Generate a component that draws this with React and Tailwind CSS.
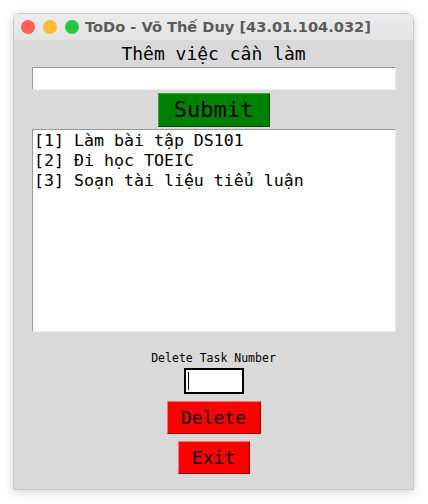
import React, { useState } from "react";

const mono = { fontFamily: '"DejaVu Sans Mono", "Liberation Mono", monospace' };

const App = () => {
  const [task, setTask] = useState("");
  const [num, setNum] = useState("");
  const [tasks, setTasks] = useState([
    "Làm bài tập DS101",
    "Đi học TOEIC",
    "Soạn tài liệu tiểu luận",
  ]);

  const addTask = () => {
    if (!task.trim()) return;
    setTasks([...tasks, task.trim()]);
    setTask("");
  };

  const deleteTask = () => {
    const i = parseInt(num, 10) - 1;
    if (isNaN(i) || i < 0 || i >= tasks.length) return;
    setTasks(tasks.filter((_, idx) => idx !== i));
    setNum("");
  };

  return (
    <div className="w-[428px] h-[504px] bg-white pt-[13px] pl-[13px]">
      <div className="w-[401px] h-[477px] flex flex-col rounded-t-[7px] border border-[#c9c9c9] shadow-[0_2px_10px_rgba(0,0,0,0.18)] overflow-hidden">
        {/* title bar */}
        <div className="h-[27px] shrink-0 flex items-center bg-gradient-to-b from-[#ececec] to-[#e3e3e3] border-b border-[#dadada] pl-[7px]">
          <span className="w-[14px] h-[14px] rounded-full bg-[#fe5f57]" />
          <span className="w-[14px] h-[14px] rounded-full bg-[#febc2e] ml-[8px]" />
          <span className="w-[14px] h-[14px] rounded-full bg-[#28c840] ml-[8px]" />
          <span
            className="ml-[6px] text-[14.6px] font-bold text-[#5b5b5b] leading-none"
            style={{ fontFamily: '"DejaVu Sans", "Liberation Sans", sans-serif' }}
          >
            ToDo - Võ Thế Duy [43.01.104.032]
          </span>
        </div>

        {/* body */}
        <div className="flex-1 bg-[#d9d9d9] flex flex-col items-center" style={mono}>
          <div className="h-[26px] text-[18px] leading-[26px] text-black">Thêm việc cần làm</div>

          <input
            value={task}
            onChange={(e) => setTask(e.target.value)}
            className="w-[364px] h-[23px] ml-[1px] bg-white border border-t-[#9a9a9a] border-l-[#9a9a9a] border-b-[#ececec] border-r-[#ececec] outline-none px-1 text-[16px]"
          />

          <button
            onClick={addTask}
            className="mt-[3px] w-[112px] h-[34px] bg-[#008000] border border-t-[#3aa03a] border-l-[#3aa03a] border-b-[#004d00] border-r-[#004d00] text-[22px] leading-none text-black"
          >
            Submit
          </button>

          <div className="mt-[2px] w-[364px] h-[203px] ml-[1px] bg-white border border-t-[#9a9a9a] border-l-[#9a9a9a] border-b-[#ececec] border-r-[#ececec] pl-[1px] pt-[1px]">
            {tasks.map((t, i) => (
              <div key={i} className="text-[16.6px] leading-[20px] text-black whitespace-pre">
                [{i + 1}] {t}
              </div>
            ))}
          </div>

          <div className="mt-[19px] text-[11.5px] leading-[14px] text-black">Delete Task Number</div>

          <div className="mt-[3px] w-[60px] h-[26px] border-2 border-black bg-white flex items-center pl-[2px]">
            <span className="w-[1px] h-[18px] bg-black shrink-0" />
            <input
              value={num}
              onChange={(e) => setNum(e.target.value)}
              className="w-full h-full outline-none bg-white text-[14px]"
            />
          </div>

          <button
            onClick={deleteTask}
            className="mt-[7px] w-[94px] h-[33px] bg-[#ff0000] border border-t-[#ff7070] border-l-[#ff7070] border-b-[#a00000] border-r-[#a00000] text-[18px] leading-none text-black"
          >
            Delete
          </button>

          <button className="mt-[7px] w-[72px] h-[33px] bg-[#ff0000] border border-t-[#ff7070] border-l-[#ff7070] border-b-[#a00000] border-r-[#a00000] text-[18px] leading-none text-black">
            Exit
          </button>
        </div>
      </div>
    </div>
  );
};

export default App;
